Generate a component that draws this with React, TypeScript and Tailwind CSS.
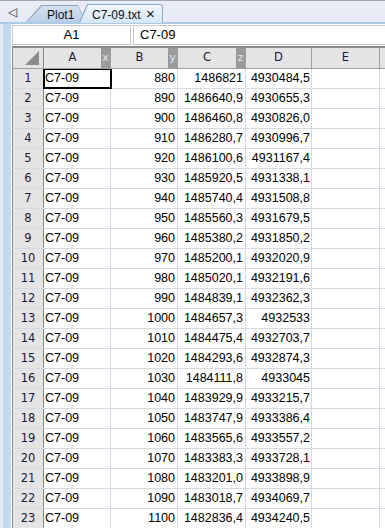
import React from 'react';

const rows: [number, string, string][] = [
  [880, '1486821', '4930484,5'],
  [890, '1486640,9', '4930655,3'],
  [900, '1486460,8', '4930826,0'],
  [910, '1486280,7', '4930996,7'],
  [920, '1486100,6', '4931167,4'],
  [930, '1485920,5', '4931338,1'],
  [940, '1485740,4', '4931508,8'],
  [950, '1485560,3', '4931679,5'],
  [960, '1485380,2', '4931850,2'],
  [970, '1485200,1', '4932020,9'],
  [980, '1485020,1', '4932191,6'],
  [990, '1484839,1', '4932362,3'],
  [1000, '1484657,3', '4932533'],
  [1010, '1484475,4', '4932703,7'],
  [1020, '1484293,6', '4932874,3'],
  [1030, '1484111,8', '4933045'],
  [1040, '1483929,9', '4933215,7'],
  [1050, '1483747,9', '4933386,4'],
  [1060, '1483565,6', '4933557,2'],
  [1070, '1483383,3', '4933728,1'],
  [1080, '1483201,0', '4933898,9'],
  [1090, '1483018,7', '4934069,7'],
  [1100, '1482836,4', '4934240,5'],
];

const HeaderCell: React.FC<{ label: string; tag?: string; w: string }> = ({ label, tag, w }) => (
  <div className={`${w} shrink-0 h-full flex border-r border-[#a0a0a0] bg-[#e4e4e4]`}>
    <div className="flex-1 flex items-center justify-center text-[#1a1a3a]">{label}</div>
    {tag && (
      <div className="w-[9px] h-full bg-[#9a9a9a] text-[#dfe9f5] flex items-center justify-center text-[11px]">
        {tag}
      </div>
    )}
  </div>
);

const App: React.FC = () => {
  return (
    <div className="w-[385px] h-[528px] overflow-hidden bg-[#e9ebf6] text-[12.5px] font-['Liberation_Sans',Arial,sans-serif] text-black">
      {/* tab strip */}
      <div className="relative h-[22px] border-t border-[#a3a3b3] bg-[#e9ebf6]">
        <span className="absolute left-[8px] top-[2px] text-[12px] text-[#333]">◁</span>
        {/* Plot1 tab */}
        <div className="absolute left-[26px] top-[4px] w-[60px] h-[17px] bg-[#8fa3bf] [clip-path:polygon(0_100%,15px_0,52px_0,60px_100%)]" />
        <div className="absolute left-[27px] top-[5px] w-[58px] h-[16px] bg-gradient-to-b from-[#d3e0f1] to-[#bccfe7] [clip-path:polygon(0_100%,15px_0,51px_0,58px_100%)]" />
        <span className="absolute left-[47px] top-[5px] text-[12px] text-[#111]">Plot1</span>
        {/* active tab */}
        <div className="absolute left-[79px] top-[3px] w-[84px] h-[18px] bg-[#8fa9c4] rounded-tr-[3px] [clip-path:polygon(0_100%,8px_0,84px_0,84px_100%)]" />
        <div className="absolute left-[80px] top-[4px] w-[82px] h-[18px] bg-gradient-to-b from-[#f3f8fd] to-[#d4e6f5] rounded-tr-[2px] [clip-path:polygon(0_100%,8px_0,82px_0,82px_100%)]" />
        <span className="absolute left-[92px] top-[5px] text-[12px] text-[#111]">C7-09.txt</span>
        <span className="absolute left-[146px] top-[2px] text-[15px] text-[#111]">×</span>
      </div>
      <div className="h-[2px] bg-[#a9cbe5]" />
      <div className="flex h-[504px]">
        {/* left frame */}
        <div className="w-[12px] shrink-0 flex">
          <div className="w-[3px] bg-[#e6ebf4]" />
          <div className="w-[8px] bg-[#c5d9ed]" />
          <div className="w-[1px] bg-white" />
        </div>
        <div className="flex-1 bg-white flex flex-col">
          {/* formula bar */}
          <div className="h-[22px] pt-[1px] flex bg-white">
            <div className="w-[119px] h-[20px] border border-[#c8c8c8] bg-white flex items-center justify-center text-[13px]">A1</div>
            <div className="w-[2px]" />
            <div className="flex-1 h-[20px] border border-[#c8c8c8] border-r-0 bg-white flex items-center pl-[6px] text-[13px]">C7-09</div>
          </div>
          {/* column header */}
          <div className="h-[23px] flex border-t-2 border-b border-t-[#8a8a8a] border-b-[#a0a0a0] font-['DejaVu_Sans',sans-serif] text-[11.5px]">
            <div className="w-[32px] shrink-0 h-full border-l border-r border-[#8a8a8a] bg-[#e4e4e4] relative">
              <div className="absolute right-[4px] bottom-[3px] w-[14px] h-[14px] bg-[#8c8c8c] [clip-path:polygon(100%_0,100%_100%,0_100%)]" />
            </div>
            <HeaderCell label="A" tag="x" w="w-[67px]" />
            <HeaderCell label="B" tag="y" w="w-[67px]" />
            <HeaderCell label="C" tag="z" w="w-[68px]" />
            <HeaderCell label="D" w="w-[66px]" />
            <HeaderCell label="E" w="w-[68px]" />
            <div className="flex-1 bg-[#e4e4e4]" />
          </div>
          {/* rows */}
          <div className="flex-1 overflow-hidden">
            {rows.map(([b, c, d], i) => (
              <div key={i} className="h-[20px] flex border-b border-[#d3dae6]">
                <div className="w-[32px] shrink-0 h-full border-l border-r border-[#8a8a8a] bg-[#e4e4e4] flex items-center justify-center text-[#1a1a3a] font-['DejaVu_Sans',sans-serif] text-[11.5px]">
                  {i + 1}
                </div>
                <div
                  className={`w-[67px] shrink-0 h-full border-r border-[#d3dae6] flex items-center pl-[1px] ${
                    i === 0 ? 'outline-2 outline-black -outline-offset-1 relative' : ''
                  }`}
                >
                  C7-09
                </div>
                <div className="w-[67px] shrink-0 h-full border-r border-[#d3dae6] flex items-center justify-end pr-[2px]">{b}</div>
                <div className="w-[68px] shrink-0 h-full border-r border-[#d3dae6] flex items-center justify-end pr-[2px]">{c}</div>
                <div className="w-[66px] shrink-0 h-full border-r border-[#d3dae6] flex items-center justify-end pr-[1px]">{d}</div>
                <div className="w-[68px] shrink-0 h-full border-r border-[#d3dae6]" />
                <div className="flex-1" />
              </div>
            ))}
          </div>
        </div>
      </div>
    </div>
  );
};

export default App;
